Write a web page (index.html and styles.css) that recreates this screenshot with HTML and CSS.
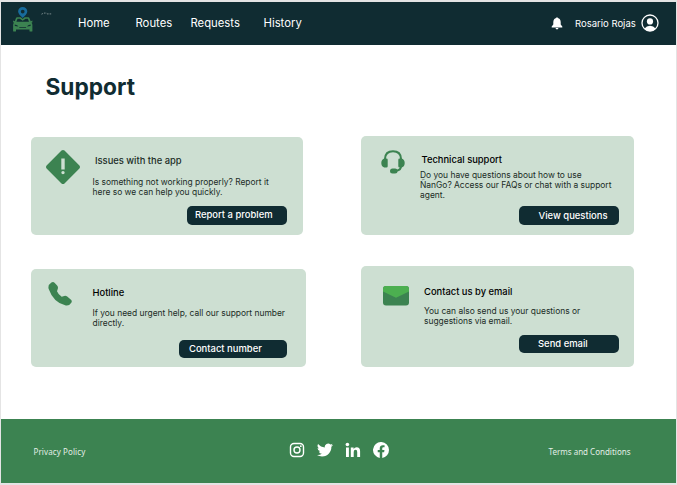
FILE: index.html
```html
<!DOCTYPE html>
<html lang="en">
<head>
<meta charset="utf-8">
<title>Support</title>
<link rel="stylesheet" href="styles.css">
</head>
<body>
<div class="page">
  <header class="topbar">
    <svg class="logo" viewBox="0 0 40 26" width="40" height="26">
      <path fill="#176b9c" fill-rule="evenodd" d="M9.7 0a4.6 4.6 0 0 1 4.6 4.6c0 2.2-2.2 4.2-4.6 6.400-2.400-2.200-4.600-4.200-4.600-6.400A4.600 4.600 0 0 1 9.700 0zm0 2.700a1.900 1.900 0 1 0 0 3.800 1.900 1.900 0 0 0 0-3.800z"/>
      <path fill="#3c8351" fill-rule="evenodd" d="M4.200 10.200h3.600l1.900 1.700 1.900-1.700h3.600q1 0 1.300 1l1.200 3 1.700-.6v1.600l-.9.500q.9.900.9 2.200V24q0 .6-.6.600h-1.700q-.6 0-.6-.6v-1.500H3V24q0 .6-.6.600H.700q-.6 0-.6-.6v-6.100q0-1.300.9-2.200l-.9-.5v-1.600l1.700.600 1.100-3q.3-1 1.300-1zm.3 1.500-1.100 3.100h12.600l-1.100-3.100h-2.300l-2.900 2-2.900-2zM1.800 17.500v1.600l3.600.5q-.6-1.800-3.600-2.100zm15.800 0q-3 .3-3.600 2.100l3.600-.5zM6.300 20.200v.9h6.800v-.9z"/>
      <path fill="none" stroke="#a8b5b5" stroke-width=".7" stroke-dasharray="1.600 1" d="M28.500 7.200q3-1.700 5.300-.9M34 6.900h4.500"/>
    </svg>
    <nav class="nav">
      <a class="nav-home">Home</a>
      <a class="nav-routes">Routes</a>
      <a class="nav-requests">Requests</a>
      <a>History</a>
    </nav>
    <div class="user">
      <svg class="bell" viewBox="0 0 12 13" width="12" height="13"><path fill="#fff" d="M6 .2q.8 0 .8.900Q9.500 1.800 9.700 5v2.600l1.600 2v.8H.700v-.8l1.600-2V5Q2.500 1.800 5.200 1.100 5.200.200 6 .2zM4.500 11.100h3Q7.200 12.400 6 12.400t-1.500-1.300z"/></svg>
      <span class="username">Rosario Rojas</span>
      <svg class="avatar" viewBox="0 0 18 18" width="18" height="18"><circle cx="9" cy="9" r="8" fill="none" stroke="#fff" stroke-width="1.300"/><circle cx="9" cy="7.400" r="3.100" fill="#fff"/><path fill="#fff" d="M3.500 14.400Q5.500 11.700 9 11.700t5.500 2.700Q12.500 17 9 17t-5.500-2.600z"/></svg>
    </div>
  </header>

  <main class="content">
    <h1>Support</h1>
    <div class="cards">
      <section class="card card-issues">
        <svg class="icon" viewBox="0 0 34 34" width="34" height="34"><path fill="#3c8351" fill-rule="evenodd" d="M15.500.6q1.500-1.200 3 0L33.400 15.500q1.200 1.500 0 3L18.500 33.400q-1.500 1.200-3 0L.600 18.500q-1.200-1.500 0-3zM15.300 8.600v10.800h3.400V8.600zM17 20.900a1.700 1.700 0 1 0 0 3.400 1.700 1.700 0 0 0 0-3.400z"/></svg>
        <div class="copy">
          <h2>Issues with the app</h2>
          <p>Is something not working properly? Report it<br>here so we can help you quickly.</p>
          <button>Report a problem</button>
        </div>
      </section>
      <section class="card card-technical">
        <svg class="icon" viewBox="0 0 24 24" width="24" height="24"><path fill="none" stroke="#3c8351" stroke-width="2" d="M4 10V8.800Q4.300 1.300 12 1.300T20 8.800V10M20 16q0 4.200-4.500 4.700H13"/><path fill="#3c8351" d="M3.200 8.500h2.200q1.300 0 1.300 1.300v6.400q0 1.300-1.300 1.300H3.200Q.3 16.500.3 13t2.900-4.500zM18.600 8.500h2.200q2.900 1 2.900 4.500t-2.900 4.500h-2.200q-1.300 0-1.300-1.300V9.800q0-1.300 1.300-1.300z"/><rect x="9" y="18.600" width="7.500" height="5" rx="2.500" fill="#3c8351"/></svg>
        <div class="copy">
          <h2>Technical support</h2>
          <p>Do you have questions about how to use<br>ÑanGo? Access our FAQs or chat with a support<br>agent.</p>
          <button>View questions</button>
        </div>
      </section>
      <section class="card card-hotline">
        <svg class="icon" viewBox="0 0 24 24" width="24" height="24"><path fill="#3c8351" d="M3.400.6q1.800-1.200 3.400.4l2.300 2.600q1.300 1.500.7 3.200L9 9.200q1.300 3.400 4.700 5.500l2.500-.8q1.600-.5 3 .7l3.800 3.100q1.400 1.400.3 3.100-2 3.300-5.500 2.700Q5.500 20.800.6 6.700-.3 3 3.400.6z"/></svg>
        <div class="copy">
          <h2>Hotline</h2>
          <p>If you need urgent help, call our support number<br>directly.</p>
          <button>Contact number</button>
        </div>
      </section>
      <section class="card card-email">
        <svg class="icon" viewBox="0 0 26 20" width="26" height="20"><rect width="26" height="19.500" rx="3" fill="#3c8351"/><path fill="#4caf50" d="M0 5.500V3q0-3 3-3h20q3 0 3 3v2.500L13 11.700z"/></svg>
        <div class="copy">
          <h2>Contact us by email</h2>
          <p>You can also send us your questions or<br>suggestions via email.</p>
          <button>Send email</button>
        </div>
      </section>
    </div>
  </main>

  <footer class="footer">
    <a class="privacy">Privacy Policy</a>
    <div class="social">
      <svg viewBox="0 0 16 16" width="16" height="16"><rect x="1.500" y="1.500" width="13" height="13" rx="3.500" fill="none" stroke="#fff" stroke-width="1.400"/><circle cx="8" cy="8" r="3" fill="none" stroke="#fff" stroke-width="1.400"/><circle cx="11.800" cy="4.200" r=".9" fill="#fff"/></svg>
      <svg viewBox="0 0 24 24" width="16" height="16"><path fill="#fff" d="M23.950 4.570a10 10 0 0 1-2.820.77 4.960 4.960 0 0 0 2.160-2.720c-.95.560-2 .96-3.130 1.190a4.920 4.920 0 0 0-8.380 4.480C7.690 8.100 4.070 6.130 1.640 3.160a4.920 4.920 0 0 0 1.520 6.570 4.900 4.900 0 0 1-2.230-.61v.06a4.920 4.920 0 0 0 3.950 4.830 5 5 0 0 1-2.210.08 4.940 4.940 0 0 0 4.600 3.420A9.870 9.870 0 0 1 0 19.540a14 14 0 0 0 7.550 2.210c9.050 0 14-7.500 14-13.980l-.02-.64a9.940 9.940 0 0 0 2.420-2.560z"/></svg>
      <svg viewBox="0 0 16 16" width="16" height="16"><circle cx="2.400" cy="2.500" r="1.800" fill="#fff"/><path fill="#fff" d="M1 5.600h2.900V15H1zM5.800 5.600h2.800v1.300Q9.600 5.300 11.600 5.300q3.500 0 3.500 4V15h-2.900V9.900q0-2.100-1.600-2.100-1.900 0-1.900 2.200v5H5.800z"/></svg>
      <svg viewBox="0 0 24 24" width="16" height="16"><path fill="#fff" d="M24 12a12 12 0 1 0-13.880 11.850v-8.380H7.080V12h3.040V9.360c0-3 1.790-4.670 4.530-4.670 1.310 0 2.690.24 2.690.24v2.950h-1.520c-1.490 0-1.950.93-1.950 1.870V12h3.330l-.53 3.470h-2.800v8.380A12 12 0 0 0 24 12z"/></svg>
    </div>
    <a class="terms">Terms and Conditions</a>
  </footer>
</div>
</body>
</html>
```
FILE: styles.css
```css
* { box-sizing: border-box; }

body {
  margin: 0;
  height: 485px;
  padding: 1.5px 1px 2.5px;
  overflow: hidden;
  background: #e4e4e4;
  font-family: Inter, sans-serif;
}

.page {
  display: flex;
  flex-direction: column;
  height: 481px;
  background: #fff;
}

.topbar {
  display: flex;
  align-items: center;
  height: 43.5px;
  padding: 0 17px 0 12px;
  background: #102c32;
  color: #fff;
}

.logo { margin-top: -6px; }

.nav {
  display: flex;
  margin-left: 25px;
  font-size: 11.300px;
  line-height: 16px;
}

.nav-home { width: 57.500px; }
.nav-routes { width: 55px; }
.nav-requests { width: 73px; }

.user {
  display: flex;
  align-items: center;
  margin-left: auto;
}

.bell { margin-right: 12px; }

.username {
  width: 61px;
  margin-right: 5px;
  font-size: 9.5px;
  white-space: nowrap;
}

.content {
  height: 374px;
  padding: 27px 0 0 29.500px;
}

h1 {
  margin: 0 0 0 15px;
  color: #102c32;
  font-size: 22.700px;
  line-height: 29px;
  font-weight: 700;
}

.cards {
  display: grid;
  grid-template-columns: 275.500px 272.500px;
  grid-template-rows: 99.500px 101.500px;
  column-gap: 55px;
  row-gap: 30.500px;
  margin-top: 34.500px;
}

.card {
  display: flex;
  align-items: flex-start;
  border-radius: 5px;
  background: #cddfd2;
}

.icon { flex: none; }

.copy {
  display: flex;
  flex: 1;
  flex-direction: column;
}

h2, p { margin: 0; white-space: nowrap; }
h2 { font-size: 9.400px; line-height: 12px; font-weight: 500; }
p { font-size: 8.430px; line-height: 10.300px; color: #202c26; }

button {
  align-self: flex-end;
  height: 18.500px;
  padding: 0;
  border: 0;
  border-radius: 5px;
  background: #102c32;
  color: #fff;
  font: 500 9.450px/18px Inter, sans-serif;
  text-align: left;
  white-space: nowrap;
}

.card-issues { width: 272px; margin-top: 1.500px; padding: 13px 15.500px 0 15.500px; }
.card-issues .copy { padding: 5px 0 0 12.500px; }
.card-issues h2 { margin-left: 2.500px; color: #202c26; }
.card-issues p { margin-top: 9.500px; }
.card-issues button { width: 100px; margin-top: 9px; padding-left: 8px; }

.card-technical { padding: 14px 14.500px 0 19.500px; }
.card-technical .copy { padding: 4px 0 0 15.500px; }
.card-technical h2 { margin-left: 1.500px; }
.card-technical p { margin-top: 4px; }
.card-technical button { width: 100px; margin-top: 6px; padding-left: 19.500px; }

.card-hotline { margin-top: 3px; padding: 13px 19px 0 17.500px; }
.card-hotline .copy { padding: 5px 0 0 20.500px; }
.card-hotline p { margin-top: 9.500px; }
.card-hotline button { width: 108px; margin-top: 11px; padding-left: 10px; }

.card-email { padding: 20.500px 14.500px 0 22px; }
.card-email .copy { padding: 0 0 0 15px; }
.card-email p { margin-top: 8px; }
.card-email button { width: 100px; margin-top: 8px; padding-left: 19px; }

.footer {
  display: grid;
  grid-template-columns: 255px auto 1fr;
  align-items: center;
  height: 63.500px;
  padding: 0 45.500px 2px 32.500px;
  background: #3c8351;
  color: #e3eee6;
  font-family: "Noto Sans", sans-serif;
  font-size: 8px;
}

.privacy, .terms { padding-top: 3px; }
.privacy { letter-spacing: .1px; }
.social { display: flex; gap: 12.200px; }
.terms { justify-self: end; }
```
